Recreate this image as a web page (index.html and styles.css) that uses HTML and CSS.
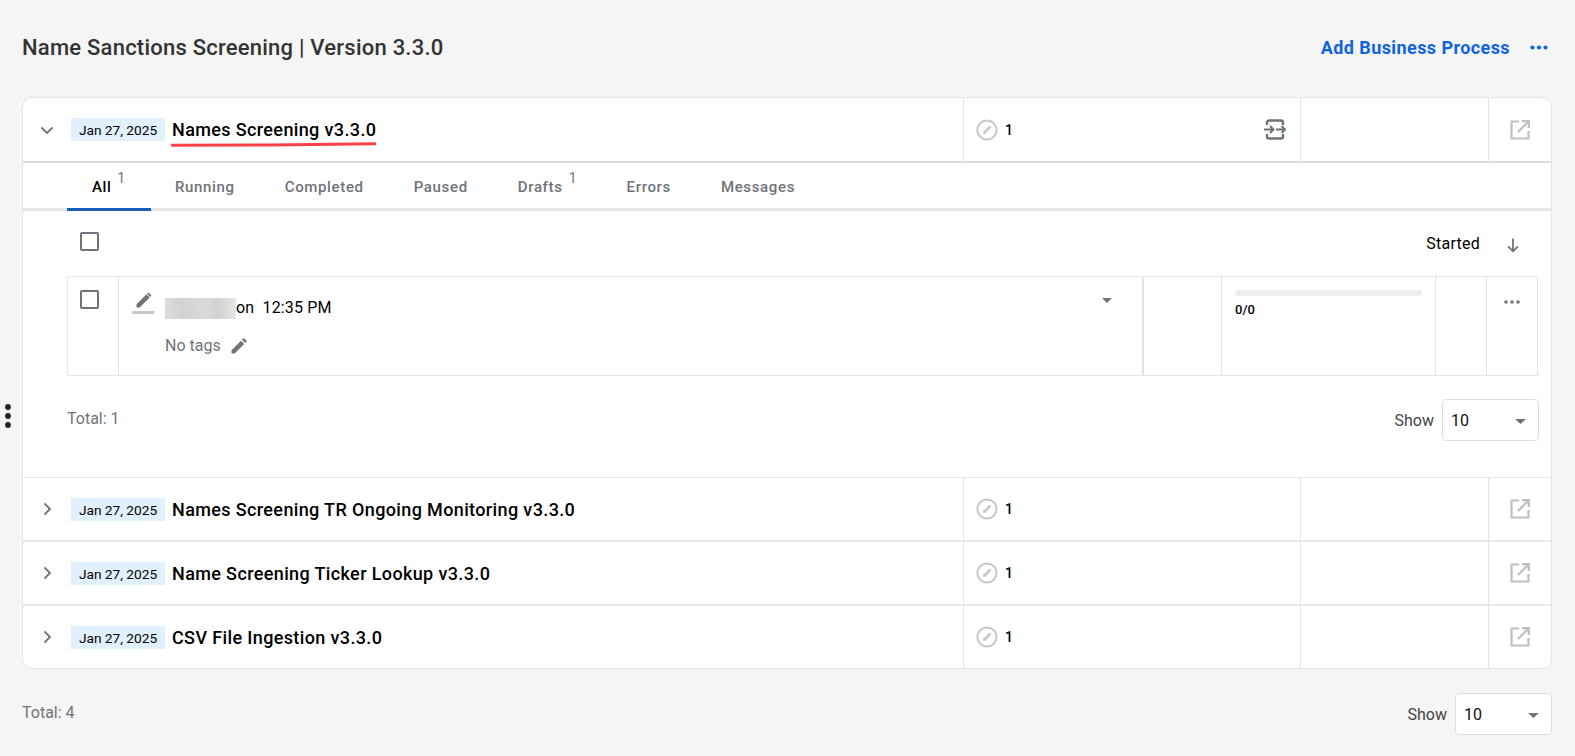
FILE: index.html
```html
<!DOCTYPE html>
<html lang="en">
<head>
<meta charset="utf-8">
<title>Name Sanctions Screening</title>
<link rel="stylesheet" href="styles.css">
</head>
<body>
<svg class="handle" width="6" height="24" viewBox="0 0 6 24"><circle cx="3" cy="3" r="2.9"/><circle cx="3" cy="12" r="2.9"/><circle cx="3" cy="21" r="2.9"/></svg>
<header class="page-head">
  <h1 class="page-title">Name Sanctions Screening | Version 3.3.0</h1>
  <div class="head-actions">
    <a class="add-link">Add Business Process</a>
    <svg class="head-dots" width="18" height="5" viewBox="0 0 18 5"><circle cx="2.5" cy="2.5" r="2.1"/><circle cx="9" cy="2.5" r="2.1"/><circle cx="15.5" cy="2.5" r="2.1"/></svg>
  </div>
</header>

<main class="card">
  <section class="row row-open">
    <div class="cell-name">
      <svg class="chev" width="14" height="14" viewBox="0 0 14 14"><path d="M1.5 4.5 7 10l5.5-5.5"/></svg>
      <span class="date">Jan 27, 2025</span>
      <span class="name name-marked">Names Screening v3.3.0
        <svg class="scribble" width="208" height="5" viewBox="0 0 208 5"><path d="M1 3.200 100 3 206 1.800"/></svg>
      </span>
    </div>
    <div class="cell-count">
      <svg class="status" width="22" height="22" viewBox="0 0 22 22"><circle cx="11" cy="11" r="9.6"/><path d="M7.500 14.500 14.500 7.500"/></svg>
      <span class="count">1</span>
      <svg class="merge" width="22" height="21" viewBox="0 0 22 21"><path class="frame" d="M3 6V3.500A2 2 0 0 1 5 1.500h12a2 2 0 0 1 2 2V6M3 15v2.500a2 2 0 0 0 2 2h12a2 2 0 0 0 2-2V15"/><path class="arrow" d="M0 10.500h9M6 7 9.500 10.500 6 14M12 10.500h9M17.500 7 21 10.500 17.500 14"/></svg>
    </div>
    <div class="cell"></div>
    <div class="cell cell-open"><svg class="open" width="20" height="20" viewBox="0 0 20 20"><path d="M9 1.500H1.500v17h17V11M12 1.200h6.800V8M18.500 1.500 8 12"/></svg></div>
  </section>

  <section class="panel">
    <nav class="tabs">
      <a class="tab tab-active">All<sup>1</sup></a>
      <a class="tab">Running</a>
      <a class="tab">Completed</a>
      <a class="tab">Paused</a>
      <a class="tab tab-sup">Drafts<sup>1</sup></a>
      <a class="tab">Errors</a>
      <a class="tab">Messages</a>
    </nav>
    <div class="toolbar">
      <span class="check"></span>
      <span class="sort">Started
        <svg width="14" height="16" viewBox="0 0 14 16"><path d="M7 1.500v12.500M2.200 9.500 7 14.300l4.800-4.800"/></svg>
      </span>
    </div>
    <div class="item">
      <div class="i-check"><span class="check"></span></div>
      <div class="i-main">
        <div class="i-line">
          <svg class="draft" width="23" height="23" viewBox="0 0 23 23"><path class="pen" d="M4.500 15.500v-3.200L14.500 2.300l3.200 3.200-10 10zM15.700 1.100a1 1 0 0 1 1.400 0l1.800 1.800a1 1 0 0 1 0 1.400l-.6.600-3.200-3.200z"/><rect class="base" x="0" y="19" width="22" height="3"/></svg>
          <span class="blur"></span><span class="when">on&nbsp; 12:35 PM</span>
          <svg class="caret caret-item" width="10" height="5" viewBox="0 0 10 5"><path d="M0 0h10L5 5z"/></svg>
        </div>
        <div class="tags">No tags
          <svg width="16" height="16" viewBox="0 0 16 16"><path d="M0.500 15.500v-3.200L10 2.800 13.200 6l-9.500 9.500zM11 1.800l1.100-1.100a1 1 0 0 1 1.400 0l1.800 1.800a1 1 0 0 1 0 1.400L14.200 5z"/></svg>
        </div>
      </div>
      <div class="i-cell"></div>
      <div class="i-progress"><div class="bar"></div><div class="ratio">0/0</div></div>
      <div class="i-cell"></div>
      <div class="i-more"><svg width="16" height="4" viewBox="0 0 16 4"><circle cx="2" cy="2" r="1.800"/><circle cx="8" cy="2" r="1.800"/><circle cx="14" cy="2" r="1.800"/></svg></div>
    </div>
    <div class="pager pager-inner">
      <span class="total">Total: 1</span>
      <span class="show">Show <span class="select">10<svg class="caret" width="11" height="5" viewBox="0 0 11 5"><path d="M0 0h11L5.500 5z"/></svg></span></span>
    </div>
  </section>

  <section class="row">
    <div class="cell-name">
      <svg class="chev" width="14" height="14" viewBox="0 0 14 14"><path d="M4.500 1.500 10 7l-5.500 5.500"/></svg>
      <span class="date">Jan 27, 2025</span>
      <span class="name">Names Screening TR Ongoing Monitoring v3.3.0</span>
    </div>
    <div class="cell-count">
      <svg class="status" width="22" height="22" viewBox="0 0 22 22"><circle cx="11" cy="11" r="9.6"/><path d="M7.500 14.500 14.500 7.500"/></svg>
      <span class="count">1</span>
    </div>
    <div class="cell"></div>
    <div class="cell cell-open"><svg class="open" width="20" height="20" viewBox="0 0 20 20"><path d="M9 1.500H1.500v17h17V11M12 1.200h6.800V8M18.500 1.500 8 12"/></svg></div>
  </section>
  <section class="row">
    <div class="cell-name">
      <svg class="chev" width="14" height="14" viewBox="0 0 14 14"><path d="M4.500 1.500 10 7l-5.500 5.500"/></svg>
      <span class="date">Jan 27, 2025</span>
      <span class="name">Name Screening Ticker Lookup v3.3.0</span>
    </div>
    <div class="cell-count">
      <svg class="status" width="22" height="22" viewBox="0 0 22 22"><circle cx="11" cy="11" r="9.6"/><path d="M7.500 14.500 14.500 7.500"/></svg>
      <span class="count">1</span>
    </div>
    <div class="cell"></div>
    <div class="cell cell-open"><svg class="open" width="20" height="20" viewBox="0 0 20 20"><path d="M9 1.500H1.500v17h17V11M12 1.200h6.800V8M18.500 1.500 8 12"/></svg></div>
  </section>
  <section class="row row-last">
    <div class="cell-name">
      <svg class="chev" width="14" height="14" viewBox="0 0 14 14"><path d="M4.500 1.500 10 7l-5.500 5.500"/></svg>
      <span class="date">Jan 27, 2025</span>
      <span class="name">CSV File Ingestion v3.3.0</span>
    </div>
    <div class="cell-count">
      <svg class="status" width="22" height="22" viewBox="0 0 22 22"><circle cx="11" cy="11" r="9.6"/><path d="M7.500 14.500 14.500 7.500"/></svg>
      <span class="count">1</span>
    </div>
    <div class="cell"></div>
    <div class="cell cell-open"><svg class="open" width="20" height="20" viewBox="0 0 20 20"><path d="M9 1.500H1.500v17h17V11M12 1.200h6.800V8M18.500 1.500 8 12"/></svg></div>
  </section>
</main>

<footer class="pager pager-outer">
  <span class="total">Total: 4</span>
  <span class="show">Show <span class="select">10<svg class="caret" width="11" height="5" viewBox="0 0 11 5"><path d="M0 0h11L5.500 5z"/></svg></span></span>
</footer>
</body>
</html>
```

FILE: styles.css
```css
* { box-sizing: border-box; }
html, body { height: 100%; }
body {
  margin: 0;
  padding: 0 23px 0 22px;
  background: #f5f5f5;
  font-family: Roboto, "Liberation Sans", sans-serif;
  font-size: 14px;
  color: #000;
  overflow: hidden;
}
.handle { position: absolute; left: 5px; top: 404px; fill: #222; }
.page-head {
  height: 97px;
  display: flex;
  justify-content: space-between;
  align-items: center;
  padding: 0 4px 3px 0;
}
.page-title { margin: 0; font-size: 22px; font-weight: 500; letter-spacing: .23px; color: #333; }
.head-actions { display: flex; align-items: center; gap: 20px; }
.add-link { font-size: 18px; font-weight: 700; letter-spacing: .42px; color: #0f62e0; }
.head-dots { fill: #0f62e0; }

.card {
  background: #fff;
  border: 1px solid #e4e4e4;
  border-radius: 10px;
  width: 1530px;
}
.row {
  display: grid;
  grid-template-columns: 940px 337px 188px 1fr;
  height: 64px;
  border-bottom: 2px solid #e9e9e9;
}
.row-open { height: 65px; border-bottom-color: #dcdcdc; }
.row-last { border-bottom: 0; height: 62px; }
.cell-name { display: flex; align-items: center; padding-left: 17px; }
.chev { fill: none; stroke: #70747a; stroke-width: 1.800; margin-right: 17px; }
.date {
  width: 94px;
  height: 23px;
  background: #e2f0fb;
  font-size: 13.700px;
  line-height: 25px;
  text-align: center;
  margin-right: 7px;
  color: #000;
  flex: none;
}
.name { font-size: 18px; font-weight: 500; letter-spacing: .37px; position: relative; color: #000; }
.scribble { position: absolute; left: -2px; top: 23px; fill: none; stroke: #ff4148; stroke-width: 3; }
.cell-count {
  display: flex;
  align-items: center;
  padding-left: 12px;
  border-left: 1px solid #e2e2e2;
}
.status { fill: none; stroke: #c8c8c8; stroke-width: 2; }
.status path { stroke-width: 2.600; }
.count { font-weight: 500; margin-left: 7px; }
.merge { margin: 0 14px 0 auto; fill: none; stroke: #6f7378; }
.merge .frame { stroke-width: 2.400; }
.merge .arrow { stroke-width: 2; }
.cell { border-left: 1px solid #e2e2e2; }
.cell-open { display: flex; align-items: center; justify-content: center; }
.open { fill: none; stroke: #c0c0c0; stroke-width: 2.200; }

.panel { height: 315px; border-bottom: 1px solid #e6e6e6; }
.tabs {
  display: flex;
  height: 48px;
  padding-left: 44px;
  border-bottom: 3px solid #e6e6e6;
}
.tab {
  position: relative;
  height: 48px;
  padding: 16px 25px 0 25px;
  font-size: 15px;
  font-weight: 500;
  color: #70747a;
  letter-spacing: .65px;
  line-height: 17px;
}
.tab sup { position: absolute; right: 25px; top: 8px; font-size: 14px; font-weight: 400; letter-spacing: 0; line-height: 14px; }
.tab-active { color: #000; width: 84px; padding-right: 0; margin-right: -1px; border-bottom: 3px solid #1a5db8; }
.tab-active sup { color: #70747a; right: 26px; }
.tab-sup { padding-right: 39px; }
.toolbar {
  display: flex;
  justify-content: space-between;
  align-items: center;
  height: 65px;
  padding: 0 31px 0 57px;
}
.check {
  display: block;
  width: 19px;
  height: 19px;
  border: 2px solid #70747a;
  border-radius: 2px;
}
.toolbar .check { margin-bottom: 4px; }
.sort { display: flex; align-items: center; gap: 26px; font-size: 16px; letter-spacing: .25px; }
.sort svg { fill: none; stroke: #70747a; stroke-width: 1.800; margin-top: 3px; }
.item {
  display: grid;
  grid-template-columns: 50px 1025px 78px 214px 51px 1fr;
  width: 1471px;
  height: 100px;
  margin-left: 44px;
  border: 2px solid #e6e6e6;
  border-width: 1px 1.500px 1.500px;
}
.i-check { padding: 13px 0 0 12px; }
.i-main { position: relative; border-left: 1px solid #e2e2e2; padding: 14px 0 0 13px; border-right: 1px solid #e4e4e4; }
.i-line { display: flex; align-items: center; height: 26px; }
.draft { margin-top: -2px; }
.draft .pen { fill: #70747a; }
.draft .base { fill: #c8c8c8; }
.blur {
  width: 71px;
  height: 21px;
  background: linear-gradient(90deg, #dcdcdc, #d2d2d2 25%, #dadada 55%, #d2d2d2 75%, #e6e6e6);
  margin: 8px 0 0 10px;
}
.when { margin-top: 6px; font-size: 16px; letter-spacing: .15px; }
.caret { fill: #70747a; }
.caret-item { position: absolute; right: 30px; top: 21px; }
.tags { display: flex; align-items: center; gap: 10px; margin: 19px 0 0 33px; color: #70747a; font-size: 16px; }
.tags svg { fill: #70747a; }
.i-cell { border-left: 1px solid #e2e2e2; }
.i-progress { border-left: 1px solid #e2e2e2; padding: 13px 13px 0 13px; }
.bar { height: 6px; background: #eeeeee; border-radius: 3px; }
.ratio { font-size: 13px; font-weight: 500; margin-top: 6px; }
.i-more { border-left: 1px solid #e2e2e2; display: flex; justify-content: center; padding-top: 23px; }
.i-more svg { fill: #70747a; }
.pager { display: flex; justify-content: space-between; align-items: center; }
.pager-inner { margin: 23px 12px 0 44px; height: 42px; }
.pager-outer { margin-top: 24px; height: 42px; width: 1530px; }
.total { color: #70747a; padding-bottom: 4px; font-size: 16px; }
.show { display: flex; align-items: center; gap: 8px; color: #444; font-size: 16px; }
.select {
  display: flex;
  justify-content: space-between;
  align-items: center;
  width: 97px;
  height: 42px;
  padding: 0 12px 0 8px;
  background: #fff;
  border: 1px solid #dedede;
  border-radius: 4px;
  color: #111;
  font-size: 16px;
}
.select .caret { margin-top: 2px; }
```
